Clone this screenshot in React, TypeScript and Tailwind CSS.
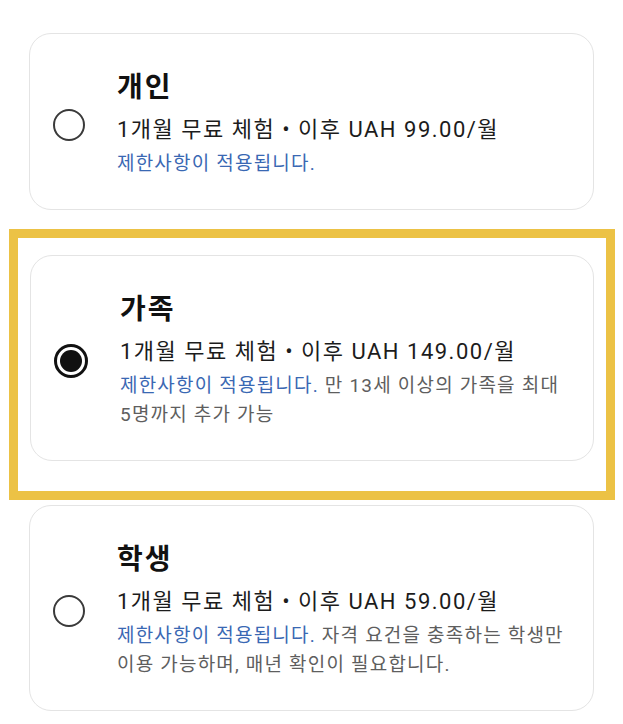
import type { ReactNode } from "react"

type Plan = {
  name: string
  price: string
  extra?: string
  selected?: boolean
}

const plans: Plan[] = [
  { name: "개인", price: "1개월 무료 체험 • 이후 UAH 99.00/월" },
  {
    name: "가족",
    price: "1개월 무료 체험 • 이후 UAH 149.00/월",
    extra: "만 13세 이상의 가족을 최대 5명까지 추가 가능",
    selected: true,
  },
  {
    name: "학생",
    price: "1개월 무료 체험 • 이후 UAH 59.00/월",
    extra: "자격 요건을 충족하는 학생만 이용 가능하며, 매년 확인이 필요합니다.",
  },
]

function Radio({ checked }: { checked?: boolean }) {
  if (checked) {
    return (
      <div className="flex h-[34px] w-[34px] shrink-0 items-center justify-center rounded-full border-[3px] border-[#111]">
        <div className="h-[22px] w-[22px] rounded-full bg-[#111]" />
      </div>
    )
  }
  return <div className="h-[32px] w-[32px] shrink-0 rounded-full border-2 border-[#3a3a3a]" />
}

function PlanCard({ plan, className = "" }: { plan: Plan; className?: string }) {
  return (
    <div
      className={`flex items-center rounded-[22px] border-[1.5px] border-[#e4e4e4] bg-white pb-[31px] pl-[23px] pr-[18px] pt-[37px] ${className}`}
    >
      <Radio checked={plan.selected} />
      <div className="ml-[32px] min-w-0 flex-1 break-keep">
        <p className="text-[28px] font-bold leading-[34px] tracking-[2px] text-[#111]">{plan.name}</p>
        <p className="mt-[10px] text-[22px] leading-[30px] tracking-[1.5px] text-[#1c1c1c]">{plan.price}</p>
        <p className="mt-[4px] text-[19px] leading-[29px] tracking-[1.2px] text-[#5e5e5e]">
          <span className="text-[#3a68b3]">제한사항이 적용됩니다.</span>
          {plan.extra && <> {plan.extra}</>}
        </p>
      </div>
    </div>
  )
}

function Highlight({ children }: { children: ReactNode }) {
  return (
    <div className="ml-[9px] mt-[19px] w-[606px] border-[9px] border-[#ecc245] pb-[30px] pl-[12px] pr-[12px] pt-[17px]">
      {children}
    </div>
  )
}

export default function App() {
  return (
    <div
      className="h-[724px] w-[623px] overflow-hidden bg-white pt-[33px]"
      style={{ fontFamily: 'Roboto, "Noto Sans CJK KR", sans-serif' }}
    >
      <PlanCard plan={plans[0]} className="ml-[29px] w-[565px]" />
      <Highlight>
        <PlanCard plan={plans[1]} />
      </Highlight>
      <PlanCard plan={plans[2]} className="ml-[29px] mt-[5px] w-[565px]" />
    </div>
  )
}
